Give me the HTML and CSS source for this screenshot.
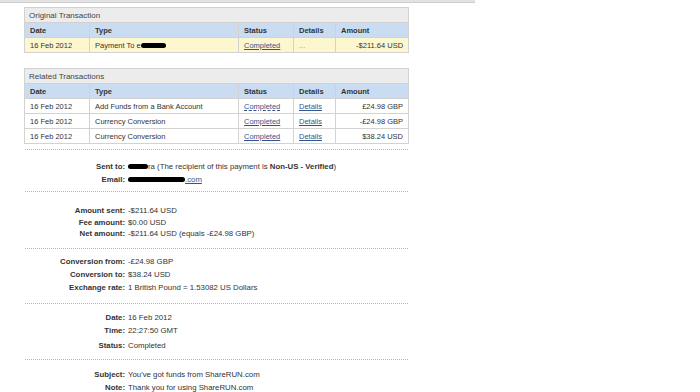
FILE: index.html
```html
<!DOCTYPE html>
<html lang="en">
<head>
  <meta charset="UTF-8">
  <title>Transaction Details</title>
  <link rel="stylesheet" href="styles.css">
</head>
<body>
<div class="topbar"></div>
<div class="page">
  <table class="txn">
    <colgroup><col class="c-date"><col class="c-type"><col class="c-status"><col class="c-details"><col class="c-amount"></colgroup>
    <tr><th colspan="5" class="txn-title">Original Transaction</th></tr>
    <tr class="txn-head">
      <td>Date</td><td>Type</td><td>Status</td><td>Details</td><td>Amount</td>
    </tr>
    <tr class="txn-row hl">
      <td>16 Feb 2012</td>
      <td>Payment To e<span class="redact r-type"></span></td>
      <td><a href="#">Completed</a></td>
      <td class="muted">...</td>
      <td class="num">-$211.64 USD</td>
    </tr>
  </table>

  <table class="txn second">
    <colgroup><col class="c-date"><col class="c-type"><col class="c-status"><col class="c-details"><col class="c-amount"></colgroup>
    <tr><th colspan="5" class="txn-title">Related Transactions</th></tr>
    <tr class="txn-head">
      <td>Date</td><td>Type</td><td>Status</td><td>Details</td><td>Amount</td>
    </tr>
    <tr class="txn-row">
      <td>16 Feb 2012</td><td>Add Funds from a Bank Account</td>
      <td><a href="#" class="dotted">Completed</a></td><td><a href="#">Details</a></td><td class="num">£24.98 GBP</td>
    </tr>
    <tr class="txn-row">
      <td>16 Feb 2012</td><td>Currency Conversion</td>
      <td><a href="#">Completed</a></td><td><a href="#">Details</a></td><td class="num">-£24.98 GBP</td>
    </tr>
    <tr class="txn-row">
      <td>16 Feb 2012</td><td>Currency Conversion</td>
      <td><a href="#">Completed</a></td><td><a href="#">Details</a></td><td class="num">$38.24 USD</td>
    </tr>
  </table>

  <div class="section s1">
    <div class="row"><span class="lbl">Sent to:</span><span class="val"><span class="redact r-name"></span>ra (The recipient of this payment is <b>Non-US - Verified</b>)</span></div>
    <div class="row"><span class="lbl">Email:</span><span class="val"><span class="redact r-mail"></span><a href="#">.com</a></span></div>
  </div>
  <div class="section s2">
    <div class="row"><span class="lbl">Amount sent:</span><span class="val">-$211.64 USD</span></div>
    <div class="row tight"><span class="lbl">Fee amount:</span><span class="val">$0.00 USD</span></div>
    <div class="row tight"><span class="lbl">Net amount:</span><span class="val">-$211.64 USD (equals -£24.98 GBP)</span></div>
  </div>
  <div class="section s3">
    <div class="row"><span class="lbl">Conversion from:</span><span class="val">-£24.98 GBP</span></div>
    <div class="row"><span class="lbl">Conversion to:</span><span class="val">$38.24 USD</span></div>
    <div class="row"><span class="lbl">Exchange rate:</span><span class="val">1 British Pound = 1.53082 US Dollars</span></div>
  </div>
  <div class="section s4">
    <div class="row"><span class="lbl">Date:</span><span class="val">16 Feb 2012</span></div>
    <div class="row"><span class="lbl">Time:</span><span class="val">22:27:50 GMT</span></div>
    <div class="row spaced"><span class="lbl">Status:</span><span class="val">Completed</span></div>
  </div>
  <div class="section s5">
    <div class="row"><span class="lbl">Subject:</span><span class="val">You've got funds from ShareRUN.com</span></div>
    <div class="row"><span class="lbl">Note:</span><span class="val">Thank you for using ShareRUN.com</span></div>
  </div>
</div>
</body>
</html>
```

FILE: styles.css
```css
body {
  margin: 0;
  background: #fff;
  font-family: "Liberation Sans", Arial, sans-serif;
  font-size: 7.5px;
  color: #333;
}
a {
  color: #34558f;
  text-decoration: underline;
}
a.dotted {
  text-decoration-style: dashed;
}
.topbar {
  width: 475px;
  height: 2px;
  background: #e2e2e2;
  border-bottom: 1px solid #cfcfcf;
}
.page {
  padding-left: 24px;
  width: 384px;
}
.txn {
  width: 384px;
  margin-top: 4px;
  border-collapse: collapse;
  border: 1px solid #c4c4c4;
  table-layout: fixed;
}
.txn.second {
  margin-top: 15px;
}
.txn td, .txn th {
  height: 14px;
  padding: 0 5px;
  border: 1px solid #d2d2d2;
  white-space: nowrap;
  overflow: hidden;
}
.txn-title {
  background: #ececec;
  font-weight: normal;
  font-size: 8px;
  text-align: left;
  color: #444;
  padding-left: 4px !important;
}
.txn-head td {
  background: #c9dcf1;
  font-weight: bold;
  color: #333;
}
.c-date { width: 65px; }
.c-type { width: 149px; }
.c-status { width: 55px; }
.c-details { width: 42px; }
.c-amount { width: 73px; }
.txn-row td {
  background: #fff;
}
.txn-row.hl td {
  background: #fdf7cf;
}
.num {
  text-align: right;
}
.muted {
  color: #999;
}
.redact {
  display: inline-block;
  height: 5px;
  background: #000;
  border-radius: 3px;
  vertical-align: middle;
}
.r-type { width: 25px; }
.r-name { width: 20px; }
.r-mail { width: 57px; }
.section {
  border-top: 1px dotted #b5b5b5;
  margin-left: 1px;
  font-size: 7.8px;
}
.s1 { margin-top: 5px; padding: 10px 0 5px; }
.s2 { padding: 12px 0 9px; }
.s3 { padding: 6px 0 9px; }
.s4 { padding: 7px 0 7px; }
.s5 { padding: 8px 0 0; }
.row {
  display: flex;
  height: 13px;
  align-items: center;
  margin-left: -25px;
}
.row.tight {
  height: 11px;
}
.row.spaced {
  margin-top: 2px;
}
.lbl {
  width: 125px;
  text-align: right;
  font-weight: bold;
  padding-right: 3px;
}
.val {
  white-space: nowrap;
}
```
